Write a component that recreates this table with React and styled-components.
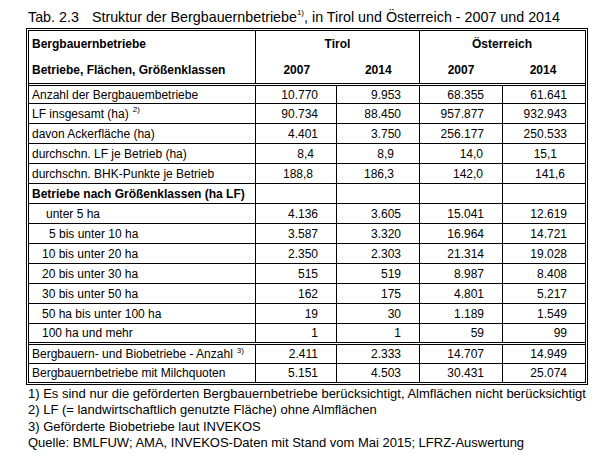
import React from 'react';
import styled, { createGlobalStyle } from 'styled-components';

const GlobalStyle = createGlobalStyle`
	html, body {
		margin: 0;
		padding: 0;
		background: #ffffff;
	}
	body {
		font-family: "Liberation Sans", Arial, sans-serif;
		color: #000000;
	}
`;

// pads = right padding of each number cell (decimals sit a bit further left)
const rows = [
	{ label: 'Anzahl der Bergbauembetriebe', values: ['10.770', '9.953', '68.355', '61.641'], h: 17 },
	{ label: 'LF insgesamt (ha)', sup: '2)', values: ['90.734', '88.450', '957.877', '932.943'] },
	{ label: 'davon Ackerfläche (ha)', values: ['4.401', '3.750', '256.177', '250.533'] },
	{ label: 'durchschn. LF je Betrieb (ha)', values: ['8,4', '8,9', '14,0', '15,1'], pads: [22, 25, 19, 28] },
	{ label: 'durchschn. BHK-Punkte je Betrieb', values: ['188,8', '186,3', '142,0', '141,6'], pads: [23, 25, 19, 20] },
	{ label: 'Betriebe nach Größenklassen (ha LF)', bold: true, values: ['', '', '', ''] },
	{ label: 'unter 5 ha', indent: 17, values: ['4.136', '3.605', '15.041', '12.619'] },
	{ label: '5 bis unter 10 ha', indent: 20, values: ['3.587', '3.320', '16.964', '14.721'] },
	{ label: '10 bis unter 20 ha', indent: 13, values: ['2.350', '2.303', '21.314', '19.028'] },
	{ label: '20 bis unter 30 ha', indent: 13, values: ['515', '519', '8.987', '8.408'] },
	{ label: '30 bis unter 50 ha', indent: 13, values: ['162', '175', '4.801', '5.217'] },
	{ label: '50 ha bis unter 100 ha', indent: 13, values: ['19', '30', '1.189', '1.549'] },
	{ label: '100 ha und mehr', indent: 13, values: ['1', '1', '59', '99'], h: 18, double: true },
	{ label: 'Bergbauern- und Biobetriebe - Anzahl', sup: '3)', values: ['2.411', '2.333', '14.707', '14.949'], h: 18 },
	{ label: 'Bergbauernbetriebe mit Milchquoten', values: ['5.151', '4.503', '30.431', '25.074'], h: 18, last: true },
];

const colWidths = [81, 83, 83, 82];

const footnotes = [
	'1) Es sind nur die geförderten Bergbauernbetriebe berücksichtigt, Almflächen nicht berücksichtigt',
	'2) LF (= landwirtschaftlich genutzte Fläche) ohne Almflächen',
	'3) Geförderte Biobetriebe laut INVEKOS',
	'Quelle: BMLFUW; AMA, INVEKOS-Daten mit Stand vom Mai 2015; LFRZ-Auswertung',
];

function App() {
	return (
		<Page>
			<GlobalStyle />
			<Title>
				<TabNo>Tab. 2.3</TabNo>
				Struktur der Bergbauernbetriebe<TitleSup>1)</TitleSup>, in Tirol und Österreich - 2007 und 2014
			</Title>
			<Table>
				<Head>
					<HeadLabel>
						<HeadLine>Bergbauernbetriebe</HeadLine>
						<HeadLine>Betriebe, Flächen, Größenklassen</HeadLine>
					</HeadLabel>
					<HeadGroup>
						<GroupName>Tirol</GroupName>
						<YearRow>
							<Year>2007</Year>
							<Year>2014</Year>
						</YearRow>
					</HeadGroup>
					<HeadGroup $last>
						<GroupName>Österreich</GroupName>
						<YearRow>
							<Year>2007</Year>
							<Year>2014</Year>
						</YearRow>
					</HeadGroup>
				</Head>
				{rows.map((row, i) => (
					<Row key={i} $h={row.h || 19} $double={row.double} $last={row.last}>
						<LabelCell $bold={row.bold} $indent={row.indent || 3}>
							{row.label}
							{row.sup && <CellSup>{row.sup}</CellSup>}
						</LabelCell>
						{row.values.map((v, j) => (
							<NumCell key={j} $w={colWidths[j]} $pad={row.pads ? row.pads[j] : 18} $last={j === 3}>
								{v}
							</NumCell>
						))}
					</Row>
				))}
			</Table>
			<Notes>
				{footnotes.map((n, i) => <Note key={i}>{n}</Note>)}
			</Notes>
		</Page>
	);
}

const Page = styled.div`
	padding: 8px 0 0 26px;
	width: 562px;
`;

const Title = styled.div`
	font-size: 14.3px;
	line-height: 18px;
	padding-left: 2px;
	margin-bottom: 2px;
	white-space: nowrap;
`;

const TabNo = styled.span`
	display: inline-block;
	margin-right: 13px;
`;

const TitleSup = styled.sup`
	font-size: 8px;
	vertical-align: 7px;
	line-height: 0;
`;

const Table = styled.div`
	display: flex;
	flex-direction: column;
	width: 556px;
	border: 3px double #000;
	font-size: 12px;
`;

const Head = styled.div`
	display: flex;
	height: 52px;
	border-bottom: 3px double #000;
`;

const HeadLabel = styled.div`
	display: flex;
	flex-direction: column;
	width: 223px;
	padding-left: 3px;
	border-right: 1px solid #000;
	font-weight: bold;
`;

const HeadLine = styled.div`
	height: 26px;
	line-height: 26px;
`;

const HeadGroup = styled.div`
	display: flex;
	flex-direction: column;
	width: ${p => (p.$last ? '164px' : '163px')};
	border-right: ${p => (p.$last ? 'none' : '1px solid #000')};
	font-weight: bold;
`;

const GroupName = styled.div`
	height: 26px;
	line-height: 26px;
	text-align: center;
`;

const YearRow = styled.div`
	display: flex;
	height: 26px;
	line-height: 26px;
`;

const Year = styled.div`
	flex: 1;
	text-align: center;
`;

const Row = styled.div`
	display: flex;
	height: ${p => p.$h}px;
	border-bottom: ${p => (p.$last ? 'none' : p.$double ? '3px double #000' : '1px solid #000')};
`;

const LabelCell = styled.div`
	display: flex;
	align-items: center;
	width: ${p => 226 - p.$indent}px;
	padding-left: ${p => p.$indent}px;
	border-right: 1px solid #000;
	font-weight: ${p => (p.$bold ? 'bold' : 'normal')};
	white-space: nowrap;
`;

const CellSup = styled.span`
	font-size: 8px;
	margin-left: 4px;
	align-self: flex-start;
	margin-top: 1px;
`;

const NumCell = styled.div`
	display: flex;
	align-items: center;
	justify-content: flex-end;
	width: ${p => p.$w - p.$pad - (p.$last ? 0 : 1)}px;
	padding-right: ${p => p.$pad}px;
	border-right: ${p => (p.$last ? 'none' : '1px solid #000')};
`;

const Notes = styled.div`
	padding: 1px 0 0 2px;
	font-size: 13px;
	line-height: 16.3px;
	white-space: nowrap;
`;

const Note = styled.div``;

export default App;
